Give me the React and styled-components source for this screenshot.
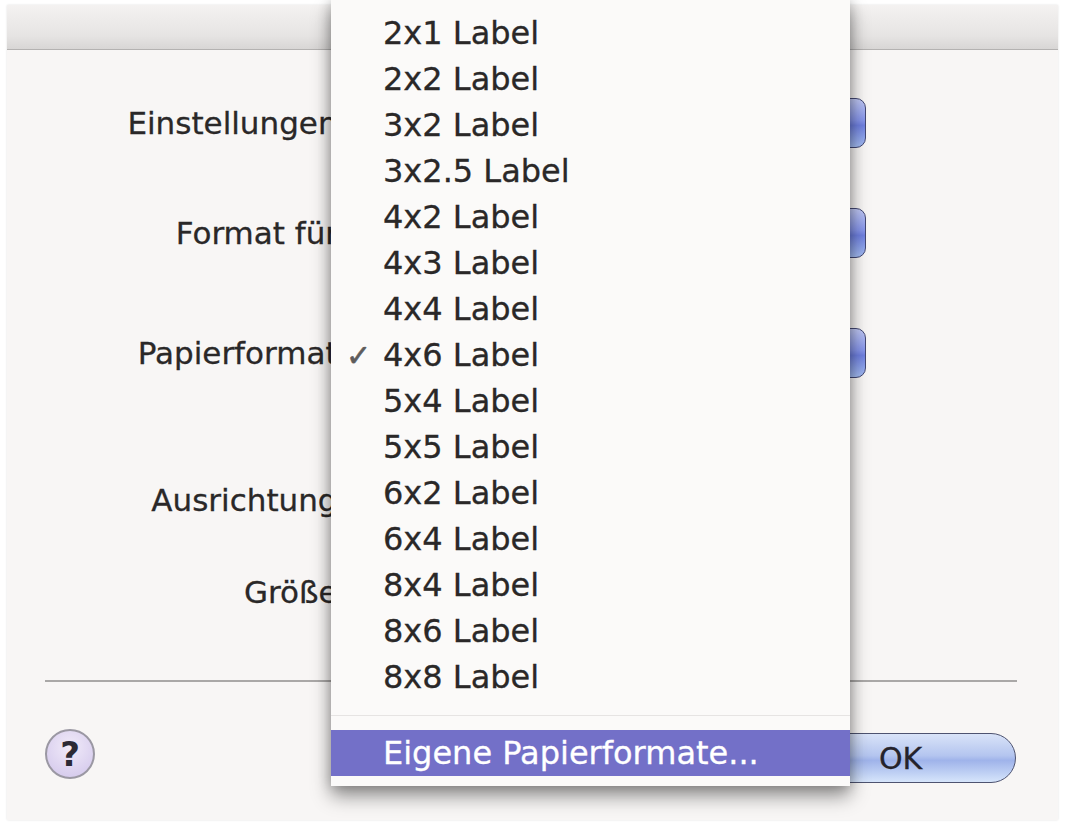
import styled, { createGlobalStyle } from "styled-components";

const Global = createGlobalStyle`
  html, body {
    margin: 0;
    background: #ffffff;
  }
  body {
    font-family: "DejaVu Sans", "Liberation Sans", sans-serif;
    color: #2a2828;
  }
`;

const formats = [
  "2x1", "2x2", "3x2", "3x2.5", "4x2", "4x3", "4x4", "4x6",
  "5x4", "5x5", "6x2", "6x4", "8x4", "8x6", "8x8",
];

// die Felder links im Dialog
const rows = [
  { label: "Einstellungen:", top: 48, popup: true },
  { label: "Format für:", top: 60, popup: true },
  { label: "Papierformat:", top: 70, popup: true },
  { label: "Ausrichtung:", top: 97 },
  { label: "Größe:", top: 42 },
];

function App() {
  return (
    <Page>
      <Global />
      <Window>
        <TitleBar />
        <Form>
          {rows.map((r) => (
            <Row key={r.label} $top={r.top}>
              <Label>{r.label}</Label>
              {r.popup && <Popup />}
            </Row>
          ))}
        </Form>
        <Separator />
        <Footer>
          <HelpButton>?</HelpButton>
          <OkButton>OK</OkButton>
        </Footer>
      </Window>

      <Menu>
        {formats.map((f) => (
          <MenuItem key={f}>
            {f === "4x6" && <Check>✓</Check>}
            {f} Label
          </MenuItem>
        ))}
        <MenuSeparator />
        <MenuItem $selected>Eigene Papierformate...</MenuItem>
        <MenuBottom />
      </Menu>
    </Page>
  );
}

const Page = styled.div`
  position: relative;
  width: 1065px;
  height: 823px;
  overflow: hidden;
  padding: 5px 0 0 7px;
  box-sizing: border-box;
`;

const Window = styled.div`
  width: 1051px;
  height: 815px;
  background: #f8f6f5;
  display: flex;
  flex-direction: column;
  box-shadow: 0 0 2px rgba(0, 0, 0, 0.12);
`;

const TitleBar = styled.div`
  height: 44px;
  flex-shrink: 0;
  background: linear-gradient(#f4f2f1, #e6e4e3 70%, #d8d6d5);
  border-bottom: 1px solid #b4b2b1;
`;

const Form = styled.div`
  display: flex;
  flex-direction: column;
`;

const Row = styled.div`
  display: flex;
  align-items: center;
  height: 50px;
  margin-top: ${(p) => p.$top}px;
`;

const Label = styled.div`
  width: 341px;
  text-align: right;
  font-size: 31px;
  color: #2a2828;
  -webkit-text-stroke: 0.3px #2a2828;
  white-space: nowrap;
`;

const Popup = styled.div`
  margin-left: 6px;
  width: 512px;
  height: 50px;
  box-sizing: border-box;
  border: 1.5px solid #434873;
  border-radius: 10px;
  background: linear-gradient(
    #c0c8f4,
    #8594ea 45%,
    #6f80e0 55%,
    #a3bcf2
  );
`;

const Separator = styled.div`
  margin: 63px 41px 0 38px;
  height: 2px;
  background: #aaa8a7;
`;

const Footer = styled.div`
  display: flex;
  align-items: flex-start;
  justify-content: space-between;
  padding: 47px 42px 0 38px;
`;

const HelpButton = styled.div`
  width: 50px;
  height: 50px;
  box-sizing: border-box;
  border-radius: 50%;
  border: 2px solid #9b98a3;
  background: radial-gradient(circle at 50% 35%, #f1ebf9, #d0c4ea);
  display: flex;
  align-items: center;
  justify-content: center;
  font-size: 34px;
  font-weight: bold;
  color: #2c2a35;
`;

const OkButton = styled.div`
  margin-top: 4px;
  width: 200px;
  height: 50px;
  box-sizing: border-box;
  border: 1.5px solid #4e5370;
  border-radius: 25px;
  background: linear-gradient(
    #d9e3f8,
    #b4c5ef 45%,
    #9fb3ea 55%,
    #d6e5fb
  );
  display: flex;
  align-items: center;
  padding-left: 62px;
  font-size: 30px;
  color: #25232b;
  -webkit-text-stroke: 0.3px #25232b;
`;

// aufgeklapptes Popup-Menü über dem Dialog
const Menu = styled.div`
  position: absolute;
  left: 331px;
  top: 0;
  width: 519px;
  padding-top: 10px;
  background: #fbfaf9;
  box-shadow: 0 10px 18px rgba(0, 0, 0, 0.42), 0 0 12px rgba(0, 0, 0, 0.2);
`;

const MenuItem = styled.div`
  position: relative;
  height: 46px;
  display: flex;
  align-items: center;
  padding-left: 52px;
  font-size: 32px;
  white-space: nowrap;
  color: ${(p) => (p.$selected ? "#ffffff" : "#2a2828")};
  -webkit-text-stroke: 0.3px ${(p) => (p.$selected ? "#ffffff" : "#2a2828")};
  background: ${(p) => (p.$selected ? "#7370c8" : "transparent")};
`;

const Check = styled.span`
  position: absolute;
  left: 15px;
  font-size: 30px;
  color: #5e5c5c;
  -webkit-text-stroke: 0.6px #5e5c5c;
`;

const MenuSeparator = styled.div`
  height: 30px;
  display: flex;
  align-items: center;
  &::after {
    content: "";
    flex: 1;
    height: 1px;
    background: #e6e4e3;
  }
`;

const MenuBottom = styled.div`
  height: 10px;
`;

export default App;
